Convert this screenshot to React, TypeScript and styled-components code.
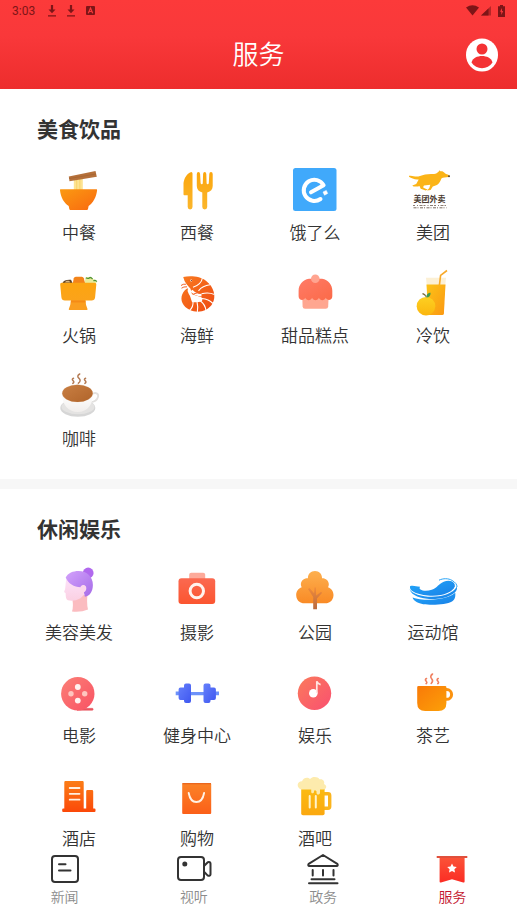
import React from "react";
import styled, { createGlobalStyle } from "styled-components";

const GlobalStyle = createGlobalStyle`
  * { box-sizing: border-box; }
  body {
    margin: 0;
    background: #fff;
    color: #333;
    font-family: Roboto, "Noto Sans CJK SC", sans-serif;
  }
`;

const Screen = styled.div`
  display: flex;
  flex-direction: column;
  height: 100vh;
  background: #fff;
`;

const Header = styled.header`
  flex: none;
  background: linear-gradient(#fc3a3a, #f9383a 40%, #ed2d2d);
`;

const StatusBar = styled.div`
  display: flex;
  align-items: center;
  justify-content: space-between;
  height: 21px;
  padding: 0 12px;
  color: #7d1517;
  font-size: 12px;
`;

const StatusGroup = styled.div<{ $gap: number }>`
  display: flex;
  align-items: center;
  gap: ${(p) => p.$gap}px;
`;

const Clock = styled.span`
  margin-right: 2px;
`;

const TitleBar = styled.div`
  display: grid;
  grid-template-columns: 1fr auto 1fr;
  align-items: center;
  height: 68px;
  padding: 0 19px;
`;

const Title = styled.h1`
  grid-column: 2;
  margin: 0;
  color: #fff;
  font-size: 26px;
  font-weight: 350;
  line-height: 36px;
`;

const AccountButton = styled.button`
  justify-self: end;
  display: flex;
  padding: 0;
  border: 0;
  background: none;
  cursor: pointer;
`;

const Content = styled.main`
  flex: 1;
  min-height: 0;
  overflow-y: auto;
  scrollbar-width: none;
  background: #f7f7f7;
`;

const Section = styled.section`
  margin-bottom: 10px;
  padding: 28px 25px 28px 20px;
  background: #fff;
`;

const SectionTitle = styled.h2`
  margin: 0 0 23px 17px;
  font-size: 21px;
  font-weight: 700;
  line-height: 26px;
`;

const ServiceGrid = styled.div`
  display: grid;
  grid-template-columns: repeat(4, 1fr);
  row-gap: 24px;
`;

const ServiceLink = styled.a`
  display: flex;
  flex-direction: column;
  align-items: center;
  gap: 7px;
  color: #333;
  font-size: 17px;
  font-weight: 350;
  line-height: 24px;
  text-decoration: none;
  white-space: nowrap;
`;

const ServiceIcon = styled.svg`
  width: 48px;
  height: 48px;
  overflow: visible;
`;

const TabBar = styled.nav`
  flex: none;
  display: grid;
  grid-template-columns: repeat(4, 1fr);
  padding: 4px 0 13px;
  background: #fff;
`;

const TabLink = styled.a<{ $active?: boolean }>`
  display: flex;
  flex-direction: column;
  align-items: center;
  gap: 2px;
  color: ${(p) => (p.$active ? "#c3142d" : "#8c8c8c")};
  font-size: 14px;
  font-weight: 350;
  line-height: 20px;
  text-decoration: none;
`;

const TabIcon = styled.svg`
  width: 32px;
  height: 32px;
  overflow: visible;
  fill: none;
  stroke: #333;
  stroke-width: 2;
  stroke-linecap: round;
  stroke-linejoin: round;
`;

type Stop = [string, string];

const Gradient = ({ id, colors, vertical }: { id: string; colors: Stop; vertical?: boolean }) => (
  <linearGradient id={id} x1="0" y1="0" x2={vertical ? "0" : "1"} y2="1">
    <stop offset="0" stopColor={colors[0]} />
    <stop offset="1" stopColor={colors[1]} />
  </linearGradient>
);

const noodles = (
  <>
    <Gradient id="bowl" colors={["#fb9a12", "#f9690f"]} />
    <path d="M18.800 12h9v13h-9z" fill="#fde391" />
    <path d="M21.700 12v12M24.800 12v12" stroke="#f9cf62" strokeWidth="0.8" />
    <path d="M13.800 10.600 40.500 5l1.300 5.800-27.300 4.400z" fill="#b5703a" />
    <path d="M14 12.600 41 8" stroke="#a0602f" strokeWidth="0.6" />
    <path d="M5.500 23.300h36q.8 0 .6 1c-.8 7-4 12.500-8.500 15.700l-.6 3q-.2 1-1.200 1H15.500q-1 0-1.200-1l-.6-3C9 37 5.700 31.500 5 24.300q-.1-1 .5-1z" fill="url(#bowl)" />
  </>
);

const cutlery = (
  <>
    <Gradient id="cutlery" colors={["#fba60c", "#fbb62c"]} vertical />
    <g fill="url(#cutlery)">
      <path d="M18.200 6q1.300 0 1.300 1.500v33.600a2.400 2.400 0 0 1-4.800 0V29.300h-3.400q-.8 0-.8-1V17C11.300 12 13.500 8 18.200 6z" />
      <path d="M23.800 8q0-2 1.600-2t1.700 2l.5 9q.1 1.200 1.200 1.200 1 0 1-1.200l.3-9q.1-2 1.600-2t1.600 2l.3 9q0 1.200 1 1.200 1.100 0 1.200-1.200l.5-9q.1-2 1.700-2t1.700 2v12c0 3.500-2 5.500-5.500 6.500v14.600a2.400 2.400 0 0 1-4.900 0V26.500c-3.500-1-5.500-3-5.500-6.500z" />
    </g>
  </>
);

const eleme = (
  <>
    <rect x="2" y="2" width="43.500" height="43" rx="2.500" fill="#40a9fb" />
    <path d="M20 26.300 32.600 19.200A10.600 10.600 0 1 0 29.500 33" fill="none" stroke="#fff" strokeWidth="4" strokeLinecap="round" strokeLinejoin="round" />
    <path d="m32 26 3.300-1.600 1.400 3-3.200 1.800z" fill="#fff" stroke="#fff" strokeWidth=".5" strokeLinejoin="round" />
  </>
);

const meituan = (
  <>
    <path d="M0 9.800C4 9 6 11.500 11 10c4-1.600 8-2.400 14-2 2 0 3.500-1.400 5-2.800l.4-1 1 1.100c1.600-.2 2.600 0 3.800 1.200.6 1.300 2.800 1.900 5.200 2.700q.6 1-.8 1.700c-2.800.5-5.600.3-7.200 1.500-1.200 3-2.500 5.400-4.500 6.600l-4.100 1.600-2.200 3.400-3.500.5 2.200-2.500 1-3.200-6.300.8-1 1.700 2 1.200 2.700 1-2 1-5-1.800-1.200-2.600c-2.300.9-4 .3-6 .5l-1.200-1 3.900-1.600 2.500-4.600c-4 .6-7.200-1.400-9.700-2.700z" fill="#fbb417" />
    <circle cx="40" cy="10.300" r="1" fill="#5b4a3c" />
    <text x="20.500" y="35.800" fill="#4a3a30" fontSize="8" fontWeight="700" textAnchor="middle">美团外卖</text>
    <path d="M4 39.500h33" stroke="#8b7d73" strokeWidth="1" strokeDasharray="2 2 1 1.500 3 1" />
    <path d="M4.500 41.800h33" stroke="#7b6b60" strokeWidth="1" strokeDasharray="3 1 1 1.500" />
  </>
);

const hotpot = (
  <>
    <Gradient id="hotpot" colors={["#fca510", "#fba31a"]} vertical />
    <path d="M30.800 8.500c2-1.500 3.500.8 5-.2 1.500-.3 1.200 1.900 3 2 2 .2 1.500 2 3 3L40 15H29z" fill="#e9ec9b" />
    <path d="M30.800 8.700q2.200 1.300 3.500.2t3.300 1.200M38.500 12q1.500-1.600 3.300.7" fill="none" stroke="#4f9335" strokeWidth="1.300" />
    <path d="M7.500 14c1-3 4-3.500 8.500-3.300l1.500 3.300z" fill="#5d4127" />
    <path d="M10 13.500c1-2 3-1.700 4.500-1.500l.5 1.500z" fill="#d6b27a" />
    <path d="m18.800 9.200q.3-1.500 2-1.500h6q1.600 0 2 1.500L30.500 16h-13z" fill="#f3841a" />
    <path d="M6.700 13.800h33.100q1.700 0 1.500 1.800l-1.200 12.600q-.4 3.200-3.500 3.200H9.900q-3.100 0-3.500-3.200L5.200 15.600q-.2-1.800 1.500-1.800z" fill="url(#hotpot)" />
    <path d="M16 31h14.400q.3 5.500 2.100 9 .3 1-.7 1H14.500q-1 0-.7-1Q15.600 36.500 16 31z" fill="#fa9e20" />
    <path d="M16 31.400h14.400l.2 2H15.800z" fill="#f58b16" />
  </>
);

const shrimp = (
  <>
    <Gradient id="shrimp" colors={["#f97a20", "#ee4a12"]} />
    <path d="M10.200 8c7-1.600 17.300-.8 23 4C41 18 43.500 27.500 39.500 34.500c-4.500 8-15 10-22.500 6.500C9.500 37.500 7 31 9.200 25.500 10.500 22 12.500 20 15 19.200q-1.300 3 .8 5.800c1.800 2.300 2 5 3.200 8q4 .5 9-.2c2-1.200 1.500-3 .5-4.500L19 25.200l-1.500-5.400-3.700-4.300q-2.600-3-3.600-7.500z" fill="url(#shrimp)" />
    <g fill="none" stroke="#fff" strokeWidth="1.100">
      <path d="M29.500 8.500q-1 7-9.500 9.800M37 15.800q-7.500 1-11.500 6M41.500 25.500q-6-2.500-13-.7M40 34.500q-4.500-4.500-11-5M33 41.300q-1-6-5.500-9.300M24.300 43.500q1-5.500-.3-11M16.500 41.500q4-3.500 3.500-9" />
      <path d="M18.500 21.500q3.500 4.500 10 4.700" strokeWidth="2.600" />
    </g>
    <path d="M8 16.500q2-1.700 5-1.300M8.500 19.200q2-1.700 5.500-1.400M20.500 25q4-2 7-.5" fill="none" stroke="#f2642a" strokeWidth="1" />
    <circle cx="18.200" cy="11.400" r="1" fill="#fff" />
    <circle cx="18.400" cy="11.500" r=".6" fill="#6b2a10" />
  </>
);

const cupcake = (
  <>
    <Gradient id="cake" colors={["#ff7b67", "#fb6a48"]} />
    <path d="M11.300 28h26.300l-.4 9.500q-.2 2.300-2.500 2.300H14q-2.200 0-2.400-2.300z" fill="#ffa690" />
    <path d="M18 9.800h13c6.500 1.200 10.300 6 10.300 12v5.400c0 4.300-5 5-6.500 1.600-1.300 3.300-5.700 3.300-6.900 0-1.200 3.300-5.600 3.300-6.800 0-1.200 3.300-5.600 3.300-6.900 0-1.500 3.400-6.500 2.700-6.600-1.600v-5.400c0-6 3.900-10.800 10.400-12z" fill="url(#cake)" />
    <circle cx="24.300" cy="9.700" r="4.300" fill="#ffa490" />
  </>
);

const juice = (
  <>
    <Gradient id="juice" colors={["#fcc317", "#fb9712"]} />
    <Gradient id="orange" colors={["#fdd022", "#fbb60e"]} vertical />
    <path d="M17 8.700h20l-.8 8H17.800z" fill="#fcf0d4" />
    <path d="M30.300 17 31.600 6.300 38 1.500" fill="none" stroke="#f8a928" strokeWidth="1.600" strokeLinejoin="round" />
    <path d="M17.500 15.500h19l-1.600 29q-.1 1.500-1.600 1.500H20.500q-1.300 0-1.400-1.500z" fill="url(#juice)" />
    <circle cx="17" cy="37.200" r="9.300" fill="url(#orange)" />
    <path d="M17.300 28.500c-.3-3 2-4.700 4.300-4.800.1 3-1.500 4.800-4.300 4.800z" fill="#3d9a4e" />
    <path d="M17 28.300q-1.500-2.600-4-3.300l1-1q2.600.8 3.600 3.800z" fill="#7a6a3a" />
  </>
);

const coffee = (
  <>
    <Gradient id="coffee" colors={["#c97f43", "#b0642a"]} />
    <Gradient id="cup" colors={["#ffffff", "#f1eeec"]} vertical />
    <ellipse cx="22.800" cy="36" rx="17.500" ry="8.700" fill="#d6d6d6" />
    <ellipse cx="23" cy="34.800" rx="16.500" ry="7.500" fill="#e4e3e2" />
    <path d="M36.500 22.500c4-3 7.500-1 6.500 2.500-.9 3.300-4 5-8 5.300" fill="none" stroke="#e2e0de" strokeWidth="1.800" />
    <path d="M7 21.500h31C38.300 32 32.500 40 22.800 40 13 40 6.800 32 7 21.500z" fill="url(#cup)" />
    <ellipse cx="22.500" cy="21.300" rx="15.600" ry="9" fill="#f0dfd0" />
    <ellipse cx="22.500" cy="21.300" rx="15.200" ry="8.600" fill="url(#coffee)" />
    <path d="M18.500 6.300q-2.200 1-.3 2.500 1.400 1.400-.4 2.600M24.700 2q-3.400 2.100-.7 4.300 2.500 2.500-.6 4.900M30.600 6.300q-2.200 1-.3 2.500 1.400 1.400-.4 2.600" fill="none" stroke="#b57c55" strokeWidth="1.500" strokeLinecap="round" />
  </>
);

const beauty = (
  <>
    <Gradient id="hair" colors={["#d3a2fb", "#a56be8"]} />
    <Gradient id="face" colors={["#fde3fb", "#fbd0e2"]} vertical />
    <circle cx="33.200" cy="7" r="5.400" fill="#b169ee" />
    <path d="M17.500 29h15q-1 8 .5 14.500-7 3-16 2 1.500-5 .5-11z" fill="#fbbcc0" />
    <path d="M12 11c-1.800 5-1.200 9-2 12.500q-1 2-.7 2.700l1.300.8c.2 3 0 6.500 2.400 7.300 3.500 1 8 .5 12.500-2l8-8-4-9z" fill="url(#face)" />
    <path d="M10.700 11.500C13 7 18 5 23.500 5c8.500 0 14.500 6 14.400 14-.1 6.500-3 11-8 11.700l-1-4.500c3-1 3.500-6.500-.2-7.200-1.500 0-2.500 1-2.700 2.300-6.500.2-13-3.800-15.300-9.800z" fill="url(#hair)" />
    <circle cx="28" cy="21.800" r="2.600" fill="#fcd7ec" />
  </>
);

const camera = (
  <>
    <Gradient id="camera" colors={["#fb6950", "#fb5530"]} vertical />
    <path d="M18.200 6.700h12q2 0 2 2V14h-16V8.700q0-2 2-2z" fill="#fdaa9a" />
    <rect x="5.500" y="12.300" width="36.700" height="25.700" rx="3" fill="url(#camera)" />
    <circle cx="23.800" cy="25" r="6.700" fill="none" stroke="#fff3ee" strokeWidth="3" />
  </>
);

const tree = (
  <>
    <Gradient id="tree" colors={["#fdb04f", "#f98a25"]} vertical />
    <path d="M24 5c4.400 0 7.200 3.300 7 7.200 3.800-.2 7 2.500 6.800 6.500q-.1 1.400-.8 2.600c3.500 1.200 5.600 4.500 5.500 8-.2 4.700-3.500 8-8 8H13.200c-4.500 0-7.900-3.300-8-8-.1-3.500 2-6.800 5.500-8q-.7-1.200-.8-2.600c-.2-4 3-6.700 7-6.500C16.800 8.300 19.600 5 24 5z" fill="url(#tree)" />
    <Gradient id="trunk" colors={["#ef8a3a", "#b96a40"]} vertical />
    <path d="M22.200 43.300V31L17 23l1.500-1 4.600 5.300.5-5.800h1.200l.4 8 5-3.700.8 1.200-5 5.500v10.800z" fill="url(#trunk)" />
  </>
);

const stadium = (
  <>
    <Gradient id="stadium" colors={["#22a8fb", "#1980e6"]} />
    <g fill="url(#stadium)">
      <path d="M1.200 20c4-1 6 .8 10 .7-3 3.300 5 5.300 11.500 3 6-2 6.500-5.700 12-8 4.500-1.800 9.300-1 11.200 2 2.400 4-5 9.500-14 11.300C18 31.500-1.500 27 1.200 20z" />
      <path d="M.5 23c3 6 17 9 29 7.300 9-1.300 16-5 18.300-9.800 1.500 5-5 9.500-15 11.700-11 2.200-30 .3-32.300-9.200z" />
      <path d="M3.500 31.500c11.500 4 33.500 3 42.800-4.800.2 4.300-.3 6.800-3.300 8.800-7 4-29 4.500-35 .8-2.100-1.200-3.800-2.800-4.500-4.800z" />
    </g>
    <path d="M27 15.500c5-3.500 14-3.700 18 .5 2.500 3 2 6-2 9" fill="none" stroke="#fff" strokeWidth="1.100" />
    <path d="M30 14.200c4-2 9.500-2 13 .2 3.500 2.100 5 4 5 6.600" fill="none" stroke="#2ba5f7" strokeWidth="1" />
  </>
);

const film = (
  <>
    <Gradient id="film" colors={["#fb8077", "#f95263"]} />
    <path d="M22 41.300h15.200q1 0 1-1t-1-1H25z" fill="#e8545f" stroke="#e8545f" strokeWidth=".5" />
    <circle cx="22.800" cy="24.700" r="16.700" fill="url(#film)" />
    <g fill="#fff2ef">
      <circle cx="22.800" cy="18" r="2.900" />
      <circle cx="22.800" cy="31.600" r="2.900" />
    </g>
    <g fill="#fec6bf">
      <circle cx="16" cy="24.800" r="2.700" />
      <circle cx="29.700" cy="24.800" r="2.700" />
    </g>
  </>
);

const dumbbell = (
  <>
    <Gradient id="plate" colors={["#6580fb", "#3f57f0"]} />
    <path d="M2.700 22.500h4v3.800h-4zM42 22.500h4v3.800h-4zM17 23h15v3.200H17z" fill="#6d92fa" />
    <g fill="url(#plate)">
      <path d="M7.500 18.500H11v-2q0-1.900 2-1.900h3q2 0 2 2v15.300q0 2-2 2h-3q-2 0-2-1.900v-1H7.500q-1.900 0-1.900-2v-8.600q0-1.900 1.900-1.900z" />
      <path d="M41 18.500h-3.500v-2q0-1.900-2-1.900h-3q-2 0-2 2v15.300q0 2 2 2h3q2 0 2-1.900v-1H41q1.900 0 1.900-2v-8.600q0-1.900-1.900-1.900z" />
    </g>
  </>
);

const music = (
  <>
    <Gradient id="music" colors={["#fb7a5c", "#f95070"]} />
    <circle cx="23.500" cy="24.300" r="16.700" fill="url(#music)" />
    <circle cx="22.300" cy="24.300" r="4.300" fill="#fff" />
    <path d="M25.800 24V12.300q1 2.800 3.800 3.300" fill="none" stroke="#ffe6e2" strokeWidth="1.700" />
  </>
);

const tea = (
  <>
    <Gradient id="tea" colors={["#f97a08", "#fca008"]} />
    <path d="M36 20.500h1.700a4.900 4.900 0 0 1 0 9.800H34" fill="none" stroke="#fb920f" strokeWidth="3" />
    <path d="M9.500 17h26.600q1.300 0 1.300 1.300V34q0 8-8 8H16.200q-8 0-8-8V18.300Q8.200 17 9.500 17z" fill="url(#tea)" />
    <path d="M17.500 9.500q-2 1.200-.3 2.700 1.300 1.300-.1 2.400M23.500 5q-3 2.200-.8 4.800 2 2.200-.5 4.700M29.200 9.500q-2 1.200-.3 2.700 1.300 1.300-.1 2.400" fill="none" stroke="#f08060" strokeWidth="1.600" strokeLinecap="round" />
  </>
);

const hotel = (
  <>
    <Gradient id="hotel" colors={["#fb7d17", "#fb4808"]} vertical />
    <path d="M10.500 9h17q1.200 0 1.200 1.200v26.300h2.500V19.200q0-1.200 1.200-1.200H37q1.200 0 1.200 1.200v17.300h1.300q1 0 1 1V39q0 1-1 1H8.200q-1 0-1-1v-1.500q0-1 1-1h1.100V10.200Q9.300 9 10.500 9z" fill="url(#hotel)" />
    <path d="M14.700 16h9.800M14.700 21.800h9.800M14.700 27.700h9.800" stroke="#fff0df" strokeWidth="1.800" strokeLinecap="round" />
  </>
);

const shopping = (
  <>
    <Gradient id="shop" colors={["#fb8328", "#fb5f18"]} vertical />
    <rect x="9.200" y="11" width="29" height="31" rx="1" fill="url(#shop)" />
    <path d="M9.500 11.700h28.500" stroke="#e9651d" strokeWidth="1.200" />
    <path d="M15.700 21c1 5.500 3.600 9 7.700 9s6.700-3.500 7.700-9" fill="none" stroke="#fff2e6" strokeWidth="1.900" strokeLinecap="round" />
  </>
);

const beer = (
  <>
    <Gradient id="beer" colors={["#fbbd12", "#fba80f"]} vertical />
    <path d="M33 21.800h4q1.700 0 1.700 1.700v11q0 1.700-1.700 1.700h-4" fill="none" stroke="#fbb41d" strokeWidth="3.400" />
    <path d="M10.200 14h23.400v27.500q0 1.800-1.800 1.800H12q-1.800 0-1.800-1.800z" fill="url(#beer)" />
    <path d="M18.700 24v11.500M24.800 24v11.500" stroke="#fff3c9" strokeWidth="2" strokeLinecap="round" />
    <path d="M10 17.500c-5-2-4-8.300 1-8.200C12.500 5.300 17 5 19 7c2.500-3 8-2.500 9.500.3 3.800-.7 5.500 2.500 4.500 4.700 3.500 1.400 2.700 5.500-.7 5.400h-3.300v3.300c0 2.400-3.500 2.500-3.500 0v-1.500c-1.200-1.600-2.500-1.300-2.500.5-.2 2.200-2.800 2-2.800 0v-2.200z" fill="#fdebad" />
  </>
);

interface Service {
  name: string;
  icon: React.ReactNode;
}

const sections: { title: string; services: Service[] }[] = [
  {
    title: "美食饮品",
    services: [
      { name: "中餐", icon: noodles },
      { name: "西餐", icon: cutlery },
      { name: "饿了么", icon: eleme },
      { name: "美团", icon: meituan },
      { name: "火锅", icon: hotpot },
      { name: "海鲜", icon: shrimp },
      { name: "甜品糕点", icon: cupcake },
      { name: "冷饮", icon: juice },
      { name: "咖啡", icon: coffee },
    ],
  },
  {
    title: "休闲娱乐",
    services: [
      { name: "美容美发", icon: beauty },
      { name: "摄影", icon: camera },
      { name: "公园", icon: tree },
      { name: "运动馆", icon: stadium },
      { name: "电影", icon: film },
      { name: "健身中心", icon: dumbbell },
      { name: "娱乐", icon: music },
      { name: "茶艺", icon: tea },
      { name: "酒店", icon: hotel },
      { name: "购物", icon: shopping },
      { name: "酒吧", icon: beer },
    ],
  },
];

const tabs: { name: string; icon: React.ReactNode; active?: boolean }[] = [
  {
    name: "新闻",
    icon: (
      <>
        <rect x="3" y="3" width="26" height="26" rx="3" />
        <path d="M10 11.300h6.500M10 17.400h11.500" />
      </>
    ),
  },
  {
    name: "视听",
    icon: (
      <>
        <rect x="0" y="4" width="26" height="23" rx="3" />
        <circle cx="6.800" cy="11" r="1.500" fill="#333" />
        <path d="m26.500 12.500 3.300-3.300q2.500-.6 2.700 1.300v10.800q-.2 1.900-2.700 1.300l-3.300-3.300" />
      </>
    ),
  },
  {
    name: "政务",
    icon: (
      <>
        <path d="M16 2 1.700 10.800q-1.200 2 .8 2.200h27q2-.2.800-2.200z" />
        <path d="M5.700 17v5.500M16 17v5.500M26.500 17v5.500M4.500 26.200h23M2 30.300h28.500" />
      </>
    ),
  },
  {
    name: "服务",
    active: true,
    icon: (
      <g stroke="none">
        <Gradient id="flag" colors={["#fb5438", "#fb2c24"]} vertical />
        <path d="M3.600 4h25v24.500q0 1.500-1.400.9L16 26.300 5 29.400q-1.400.6-1.400-.9z" fill="url(#flag)" />
        <path d="M.7 3h30.600v2H.7z" fill="#e0503c" />
        <path d="m16 10.400 1.500 3 3.300.5-2.400 2.300.6 3.300-3-1.600-3 1.600.6-3.300-2.400-2.300 3.300-.5z" fill="#fff" />
      </g>
    ),
  },
];

const DownloadIcon = () => (
  <svg width="8" height="12" viewBox="0 0 8 12" fill="currentColor" aria-hidden="true">
    <path d="M2.900 0h2.200v4.500h2.400L4 8.300.5 4.500h2.400zM0 10.300h8v1.200H0z" />
  </svg>
);

export default function App() {
  return (
    <Screen>
      <GlobalStyle />
      <Header>
        <StatusBar>
          <StatusGroup $gap={11}>
            <Clock>3:03</Clock>
            <DownloadIcon />
            <DownloadIcon />
            <svg width="9" height="9" viewBox="0 0 9 9" aria-hidden="true">
              <rect width="9" height="9" rx="1" fill="#7d1517" />
              <path d="M2.300 7.300 4.500 2l2.200 5.300M3.200 5.500h2.600" fill="none" stroke="#f9383a" strokeWidth="1.200" />
            </svg>
          </StatusGroup>
          <StatusGroup $gap={2}>
            <svg width="13" height="11" viewBox="0 0 13 11" fill="currentColor" aria-hidden="true">
              <path d="M6.500 10.500 0 2.600Q6.500-2 13 2.600z" />
            </svg>
            <svg width="15" height="11" viewBox="0 0 15 11" fill="currentColor" aria-hidden="true">
              <path d="M0 10.500 10 1v9.500z" opacity=".55" />
              <path d="M0 10.500 7.500 3.400v7.100z" />
            </svg>
            <svg width="7" height="12" viewBox="0 0 7 12" aria-hidden="true">
              <path d="M2 0h3v1.200h2V12H0V1.200h2z" fill="#7d1517" />
              <path d="M4 3 2 6.800h1.300V10L5.200 6H4z" fill="#f9383a" />
            </svg>
          </StatusGroup>
        </StatusBar>
        <TitleBar>
          <Title>服务</Title>
          <AccountButton type="button" aria-label="个人中心">
            <svg width="32" height="34" viewBox="0 0 32 34" aria-hidden="true">
              <ellipse cx="16" cy="17" rx="16" ry="16.500" fill="#fff" />
              <circle cx="16" cy="11" r="5.500" fill="#f43234" />
              <path d="M5.500 24.500c1-4.500 6-6.500 10.500-6.500s9.500 2 10.500 6.500c-2.500 3.700-6.300 5.700-10.500 5.700S8 28.200 5.500 24.500z" fill="#f43234" />
            </svg>
          </AccountButton>
        </TitleBar>
      </Header>
      <Content>
        {sections.map((section) => (
          <Section key={section.title}>
            <SectionTitle>{section.title}</SectionTitle>
            <ServiceGrid>
              {section.services.map((service) => (
                <ServiceLink key={service.name} href="#">
                  <ServiceIcon viewBox="0 0 48 48" aria-hidden="true">
                    {service.icon}
                  </ServiceIcon>
                  {service.name}
                </ServiceLink>
              ))}
            </ServiceGrid>
          </Section>
        ))}
      </Content>
      <TabBar>
        {tabs.map((tab) => (
          <TabLink key={tab.name} href="#" $active={tab.active} aria-current={tab.active ? "page" : undefined}>
            <TabIcon viewBox="0 0 32 32" aria-hidden="true">
              {tab.icon}
            </TabIcon>
            {tab.name}
          </TabLink>
        ))}
      </TabBar>
    </Screen>
  );
}
